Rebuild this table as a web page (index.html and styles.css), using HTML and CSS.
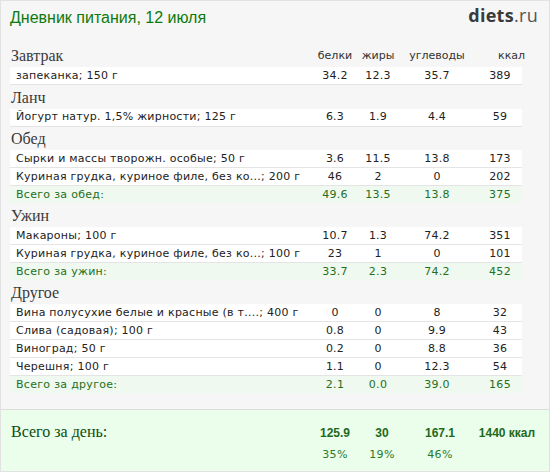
FILE: index.html
```html
<!DOCTYPE html>
<html lang="ru">
<head>
<meta charset="utf-8">
<title>Дневник питания</title>
<link rel="stylesheet" href="styles.css">
</head>
<body>
<div class="page">
  <header class="top">
    <h1 class="title">Дневник питания, 12 июля</h1>
    <div class="logo"><span class="logo-b">diets</span>.ru</div>
  </header>
  <table class="diary">
    <colgroup>
      <col class="c-name"><col class="c-p"><col class="c-f"><col class="c-c"><col class="c-k">
    </colgroup>
    <tr class="meal"><th class="meal-name">Завтрак</th><th>белки</th><th>жиры</th><th>углеводы</th><th class="kcal">ккал</th></tr>
    <tr class="item"><td class="name">запеканка; 150 г</td><td>34.2</td><td>12.3</td><td>35.7</td><td class="kcal">389</td></tr>

    <tr class="meal"><th class="meal-name">Ланч</th><th></th><th></th><th></th><th></th></tr>
    <tr class="item"><td class="name">Йогурт натур. 1,5% жирности; 125 г</td><td>6.3</td><td>1.9</td><td>4.4</td><td class="kcal">59</td></tr>

    <tr class="meal"><th class="meal-name">Обед</th><th></th><th></th><th></th><th></th></tr>
    <tr class="item"><td class="name">Сырки и массы творожн. особые; 50 г</td><td>3.6</td><td>11.5</td><td>13.8</td><td class="kcal">173</td></tr>
    <tr class="item"><td class="name">Куриная грудка, куриное филе, без ко...; 200 г</td><td>46</td><td>2</td><td>0</td><td class="kcal">202</td></tr>
    <tr class="total"><td class="name">Всего за обед:</td><td>49.6</td><td>13.5</td><td>13.8</td><td class="kcal">375</td></tr>

    <tr class="meal"><th class="meal-name">Ужин</th><th></th><th></th><th></th><th></th></tr>
    <tr class="item"><td class="name">Макароны; 100 г</td><td>10.7</td><td>1.3</td><td>74.2</td><td class="kcal">351</td></tr>
    <tr class="item"><td class="name">Куриная грудка, куриное филе, без ко...; 100 г</td><td>23</td><td>1</td><td>0</td><td class="kcal">101</td></tr>
    <tr class="total"><td class="name">Всего за ужин:</td><td>33.7</td><td>2.3</td><td>74.2</td><td class="kcal">452</td></tr>

    <tr class="meal"><th class="meal-name">Другое</th><th></th><th></th><th></th><th></th></tr>
    <tr class="item"><td class="name">Вина полусухие белые и красные (в т....; 400 г</td><td>0</td><td>0</td><td>8</td><td class="kcal">32</td></tr>
    <tr class="item"><td class="name">Слива (садовая); 100 г</td><td>0.8</td><td>0</td><td>9.9</td><td class="kcal">43</td></tr>
    <tr class="item"><td class="name">Виноград; 50 г</td><td>0.2</td><td>0</td><td>8.8</td><td class="kcal">36</td></tr>
    <tr class="item"><td class="name">Черешня; 100 г</td><td>1.1</td><td>0</td><td>12.3</td><td class="kcal">54</td></tr>
    <tr class="total"><td class="name">Всего за другое:</td><td>2.1</td><td>0.0</td><td>39.0</td><td class="kcal">165</td></tr>
  </table>
  <section class="day">
    <div class="day-label">Всего за день:</div>
    <div class="day-val">125.9</div>
    <div class="day-val">30</div>
    <div class="day-val">167.1</div>
    <div class="day-val">1440 ккал</div>
    <div></div>
    <div class="day-pct">35%</div>
    <div class="day-pct">19%</div>
    <div class="day-pct">46%</div>
    <div></div>
  </section>
</div>
</body>
</html>
```
FILE: styles.css
```css
html, body {
  margin: 0;
  padding: 0;
}
body {
  background: #ffffff;
}
.page {
  width: 548px;
  height: 470px;
  border: 1px solid #e2e2e2;
  background: #f6f6f6;
  overflow: hidden;
  font-family: "DejaVu Sans", Verdana, sans-serif;
}
.top {
  display: flex;
  justify-content: space-between;
  align-items: flex-start;
  height: 42px;
  padding: 0 11px 0 9px;
}
.title {
  margin: 5px 0 0 0;
  font-family: "Liberation Sans", Arial, sans-serif;
  font-weight: normal;
  font-size: 16px;
  line-height: 24px;
  color: #0d7a0d;
}
.logo {
  margin-top: 2px;
  font-family: "Open Sans", "DejaVu Sans", sans-serif;
  font-size: 18px;
  line-height: 24px;
  color: #555;
  letter-spacing: 0.3px;
}
.logo-b {
  font-weight: bold;
  color: #3a3a3a;
}
.diary {
  margin-left: 9px;
  width: 512px;
  table-layout: fixed;
  border-collapse: collapse;
  border-spacing: 0;
}
.c-name { width: 300px; }
.c-p { width: 50px; }
.c-f { width: 36px; }
.c-c { width: 82px; }
.c-k { width: 44px; }

.meal th {
  height: 24px;
  padding: 0 0 4px 0;
  box-sizing: border-box;
  vertical-align: bottom;
  font-weight: normal;
  font-size: 11px;
  line-height: 14px;
  color: #333;
  text-align: center;
}
.meal th.meal-name {
  text-align: left;
  padding: 0 0 2px 1px;
  font-family: "Liberation Serif", "DejaVu Serif", serif;
  font-size: 16px;
  line-height: 18px;
  color: #3a3a3a;
}
.meal th.kcal,
td.kcal {
  padding-left: 20px;
}
.item td,
.total td {
  padding: 0;
  font-size: 11px;
  line-height: 14px;
  text-align: center;
  white-space: nowrap;
  overflow: hidden;
}
.item td {
  height: 17px;
  background: #ffffff;
  color: #222;
  letter-spacing: 0.25px;
  border-bottom: 1px solid #e4e4e4;
}
.total td {
  height: 17px;
  background: #eff9ef;
  color: #237023;
  letter-spacing: 0.3px;
}
td.name {
  text-align: left;
  padding-left: 6px;
}
.day {
  margin-top: 16px;
  border-top: 1px solid #dcdcdc;
  background: #ebfdeb;
  height: 62px;
  display: grid;
  grid-template-columns: 300px 50px 44px 72px 62px;
  grid-template-rows: 24px 18px;
  padding: 10px 0 0 9px;
  align-items: center;
  justify-items: center;
}
.day-label {
  justify-self: start;
  font-family: "Liberation Serif", "DejaVu Serif", serif;
  font-size: 16px;
  color: #0b4d0b;
  padding-left: 1px;
}
.day-val {
  font-family: "Liberation Sans", Arial, sans-serif;
  font-weight: bold;
  font-size: 12px;
  color: #1d6a1d;
  padding-top: 2px;
}
.day-pct {
  font-size: 11px;
  color: #2a7a2a;
  letter-spacing: 0.3px;
  padding-top: 2px;
}
```
